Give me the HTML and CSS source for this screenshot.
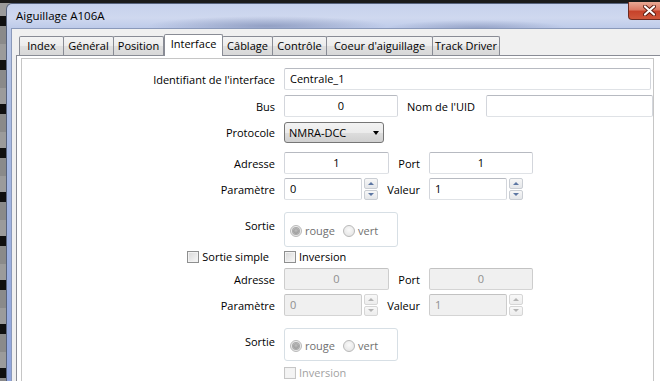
FILE: index.html
```html
<!DOCTYPE html>
<html lang="fr">
<head>
<meta charset="utf-8">
<title>Aiguillage A106A</title>
<link rel="stylesheet" href="styles.css">
</head>
<body>
<div class="screen">
  <div class="window">
    <div class="titlebar">
      <span class="title">Aiguillage A106A</span>
      <div class="close">
        <svg width="13" height="11" viewBox="0 0 13 11"><path d="M2 1.5 L11 9.5 M11 1.5 L2 9.5" stroke="#5a1a10" stroke-width="4" stroke-linecap="round"/><path d="M2 1.5 L11 9.5 M11 1.5 L2 9.5" stroke="#ffffff" stroke-width="2.2" stroke-linecap="round"/></svg>
      </div>
    </div>
    <div class="client">
      <div class="tabbar">
        <div class="tab">Index</div>
        <div class="tab">Général</div>
        <div class="tab">Position</div>
        <div class="tab active">Interface</div>
        <div class="tab">Câblage</div>
        <div class="tab">Contrôle</div>
        <div class="tab">Coeur d'aiguillage</div>
        <div class="tab">Track Driver</div>
      </div>
      <div class="pane">
        <div class="frame">
          <div class="row r-first">
            <div class="lbl">Identifiant de l'interface</div>
            <div class="input in-long">Centrale_1</div>
          </div>
          <div class="row">
            <div class="lbl">Bus</div>
            <div class="input in-bus center">0</div>
            <div class="mid mid-wide">Nom de l'UID</div>
            <div class="input in-uid"></div>
          </div>
          <div class="row">
            <div class="lbl">Protocole</div>
            <div class="combo">NMRA-DCC<span class="combo-arrow"></span></div>
          </div>
          <div class="row r-sep">
            <div class="lbl">Adresse</div>
            <div class="fa"><div class="input in-addr center">1</div></div>
            <div class="mid">Port</div>
            <div class="input in-port center">1</div>
          </div>
          <div class="row r-tight">
            <div class="lbl">Paramètre</div>
            <div class="fa">
              <div class="input in-param">0</div>
              <div class="spin"><span class="spin-btn up"></span><span class="spin-btn down"></span></div>
            </div>
            <div class="mid">Valeur</div>
            <div class="input in-param">1</div>
            <div class="spin"><span class="spin-btn up"></span><span class="spin-btn down"></span></div>
          </div>
          <div class="row r-group">
            <div class="lbl lbl-top">Sortie</div>
            <div class="group">
              <span class="opt"><span class="radio"><span class="dot"></span></span>rouge</span>
              <span class="opt"><span class="radio"></span>vert</span>
            </div>
          </div>
          <div class="row r-check">
            <div class="lbl lbl-check"><span class="cb"></span>Sortie simple</div>
            <span class="check"><span class="cb"></span>Inversion</span>
          </div>
          <div class="row">
            <div class="lbl">Adresse</div>
            <div class="fa"><div class="input in-addr center disabled">0</div></div>
            <div class="mid">Port</div>
            <div class="input in-port center disabled">0</div>
          </div>
          <div class="row r-tight">
            <div class="lbl">Paramètre</div>
            <div class="fa">
              <div class="input in-param disabled">0</div>
              <div class="spin off"><span class="spin-btn up"></span><span class="spin-btn down"></span></div>
            </div>
            <div class="mid">Valeur</div>
            <div class="input in-param disabled">1</div>
            <div class="spin off"><span class="spin-btn up"></span><span class="spin-btn down"></span></div>
          </div>
          <div class="row r-group">
            <div class="lbl lbl-top">Sortie</div>
            <div class="group group-b">
              <span class="opt"><span class="radio"><span class="dot"></span></span>rouge</span>
              <span class="opt"><span class="radio"></span>vert</span>
            </div>
          </div>
          <div class="row r-last">
            <div class="lbl"></div>
            <span class="check off"><span class="cb"></span>Inversion</span>
          </div>
        </div>
      </div>
    </div>
  </div>
</div>
</body>
</html>
```
FILE: styles.css
```css
html, body {
  margin: 0;
  padding: 0;
  overflow: hidden;
}
body {
  font-family: "Open Sans", "Noto Sans", sans-serif;
  font-size: 11px;
  color: #000;
  background: #6f6f6f;
}
.screen {
  width: 660px;
  height: 381px;
  overflow: hidden;
  box-sizing: border-box;
  padding-top: 3px;
  background:
    linear-gradient(180deg, #1b1b1b 0, #1b1b1b 3px, transparent 3px),
    repeating-linear-gradient(180deg, #9b9b9b 0 16px, #101010 16px 26px, #8a8a8a 26px 44px);
}
.window {
  margin-left: 6px;
  width: 673px;
  flex: none;
  box-sizing: border-box;
  border: 1px solid #56627c;
  border-bottom: none;
  border-radius: 6px 6px 0 0;
  padding: 0 5px 0 4px;
  background:
    radial-gradient(ellipse 120px 10px at 260px 22px, rgba(90,105,150,0.45), transparent),
    radial-gradient(ellipse 90px 8px at 470px 24px, rgba(90,105,150,0.4), transparent),
    linear-gradient(180deg, #c6d1ec 0, #cfd8ef 14px, #bac8e8 26px, #a9bbe3 120px, #8fa4dc 380px);
}
.titlebar {
  height: 24px;
  display: flex;
  align-items: flex-start;
}
.title {
  line-height: 24px;
  padding-left: 5px;
  font-size: 11.5px;
  color: #000;
}
.close {
  margin-left: auto;
  margin-right: 2px;
  margin-top: -2px;
  width: 43px;
  height: 18px;
  flex: none;
  box-sizing: border-box;
  border: 1px solid #6d2a1f;
  border-top: none;
  border-radius: 0 0 4px 4px;
  background: linear-gradient(180deg, #e9a995 0, #dc7a64 45%, #c7422a 55%, #d0573b 100%);
  display: flex;
  align-items: center;
  justify-content: center;
}
.client {
  height: 400px;
  border: 1px solid #8a99ba;
  border-bottom: none;
  background: #f0f0f0;
  padding: 5px 4px 0 4px;
}
.tabbar {
  display: flex;
  align-items: flex-end;
  height: 21px;
  padding-left: 3px;
  position: relative;
  z-index: 1;
}
.tab {
  height: 19px;
  box-sizing: border-box;
  border: 1px solid #898c95;
  border-bottom: none;
  border-radius: 2px 2px 0 0;
  margin-left: -1px;
  background: linear-gradient(180deg, #f4f4f4 0, #ececec 50%, #e0e0e0 50%, #d8d8d8 100%);
  text-align: center;
  line-height: 17px;
  white-space: nowrap;
  flex: none;
}
.tab:first-child { margin-left: 0; width: 45px; }
.tab:nth-child(2) { width: 51px; }
.tab:nth-child(3) { width: 51px; }
.tab:nth-child(4) { width: 59px; }
.tab:nth-child(5) { width: 51px; }
.tab:nth-child(6) { width: 55px; }
.tab:nth-child(7) { width: 107px; }
.tab:nth-child(8) { width: 68px; }
.tab.active {
  height: 22px;
  margin-left: 0;
  margin-bottom: -1px;
  background: #fff;
  position: relative;
  z-index: 2;
  line-height: 18px;
}
.pane {
  height: 400px;
  border: 1px solid #898c95;
  background: #fff;
  padding: 2px 0 0 4px;
}
.frame {
  width: 633px;
  height: 400px;
  box-sizing: border-box;
  border: 1px solid #c6c6c6;
  border-bottom: none;
  display: flex;
  flex-direction: column;
}
.row {
  display: flex;
  align-items: center;
  margin-top: 5px;
  flex: none;
}
.r-first { margin-top: 9px; }
.r-sep { margin-top: 9px; }
.r-tight { margin-top: 4px; }
.r-group { margin-top: 12px; align-items: flex-start; }
.r-check { margin-top: 3px; height: 13px; }
.r-last { margin-top: 5px; height: 13px; }
.lbl {
  width: 253px;
  margin-right: 9px;
  flex: none;
  display: flex;
  justify-content: flex-end;
  align-items: center;
  white-space: nowrap;
}
.lbl-top {
  margin-top: 3px;
  line-height: 22px;
}
.lbl-check {
  padding-right: 6px;
  box-sizing: border-box;
}
.input {
  height: 22px;
  box-sizing: border-box;
  border: 1px solid;
  border-color: #b7bac1 #d3d6dc #dfe2e6 #d3d6dc;
  border-radius: 2px;
  background: #fff;
  padding: 0 5px;
  line-height: 20px;
  white-space: nowrap;
  flex: none;
}
.input.center { text-align: center; }
.input.disabled {
  background: #f0f0f0;
  border-color: #c2c2c2 #cdcdcd #d4d4d4 #cdcdcd;
  color: #8f8f8f;
}
.in-long { width: 367px; }
.in-bus { width: 114px; }
.in-uid { width: 167px; }
.in-addr { width: 105px; }
.in-port { width: 104px; }
.in-param { width: 78px; }
.fa {
  width: 105px;
  display: flex;
  align-items: center;
  flex: none;
}
.mid {
  width: 40px;
  box-sizing: border-box;
  padding-right: 9px;
  display: flex;
  justify-content: flex-end;
  white-space: nowrap;
  flex: none;
}
.mid-wide {
  width: 88px;
  padding-right: 11px;
}
.combo {
  width: 100px;
  height: 21px;
  box-sizing: border-box;
  border: 1px solid #767676;
  border-radius: 3px;
  background: linear-gradient(180deg, #f3f3f3 0, #ebebeb 50%, #dddddd 50%, #d0d0d0 100%);
  padding-left: 4px;
  line-height: 19px;
  display: flex;
  align-items: center;
  flex: none;
}
.combo-arrow {
  margin-left: auto;
  margin-right: 4px;
  width: 0;
  height: 0;
  border-left: 3.5px solid transparent;
  border-right: 3.5px solid transparent;
  border-top: 4px solid #000;
}
.spin {
  width: 14px;
  height: 22px;
  margin-left: 2px;
  display: flex;
  flex-direction: column;
  gap: 1px;
  flex: none;
}
.spin-btn {
  flex: 1;
  box-sizing: border-box;
  border: 1px solid #c9cdd3;
  border-radius: 2px;
  background: linear-gradient(180deg, #f7f7f7, #e4e6e9);
  display: flex;
  align-items: center;
  justify-content: center;
}
.spin-btn.up::before {
  content: "";
  border-left: 3px solid transparent;
  border-right: 3px solid transparent;
  border-bottom: 3px solid #5d77a3;
}
.spin-btn.down::before {
  content: "";
  border-left: 3px solid transparent;
  border-right: 3px solid transparent;
  border-top: 3px solid #5d77a3;
}
.spin.off .spin-btn { border-color: #d6d6d6; background: linear-gradient(180deg, #f8f8f8, #ededed); }
.spin.off .spin-btn.up::before { border-bottom-color: #b4b4b4; }
.spin.off .spin-btn.down::before { border-top-color: #b4b4b4; }
.group {
  width: 114px;
  height: 35px;
  box-sizing: border-box;
  border: 1px solid #d7dfe5;
  border-radius: 3px;
  background: #fff;
  padding: 2px 0 0 5px;
  display: flex;
  align-items: center;
  flex: none;
}
.group-b { height: 33px; }
.opt {
  display: flex;
  align-items: center;
  gap: 3px;
  margin-right: 8px;
  color: #707070;
}
.radio {
  width: 12px;
  height: 12px;
  box-sizing: border-box;
  border: 1px solid #b9b9b9;
  border-radius: 50%;
  background: radial-gradient(circle at 50% 40%, #fafafa, #e0e0e0);
  display: flex;
  align-items: center;
  justify-content: center;
}
.dot {
  width: 6px;
  height: 6px;
  border-radius: 50%;
  background: radial-gradient(circle at 50% 40%, #bdbdbd, #8c8c8c);
  box-shadow: 0 0 0 1px #a9a9a9;
}
.check {
  display: flex;
  align-items: center;
}
.cb {
  width: 12px;
  height: 12px;
  box-sizing: border-box;
  border: 1px solid #8e8f8f;
  background: linear-gradient(135deg, #d8d8d8, #f8f8f8);
  box-shadow: inset 0 0 0 1px #f2f2f2;
  margin-right: 3px;
  flex: none;
}
.check.off { color: #a2a2a2; }
.check.off .cb { border-color: #c6c6c6; background: #f4f4f4; }
```
